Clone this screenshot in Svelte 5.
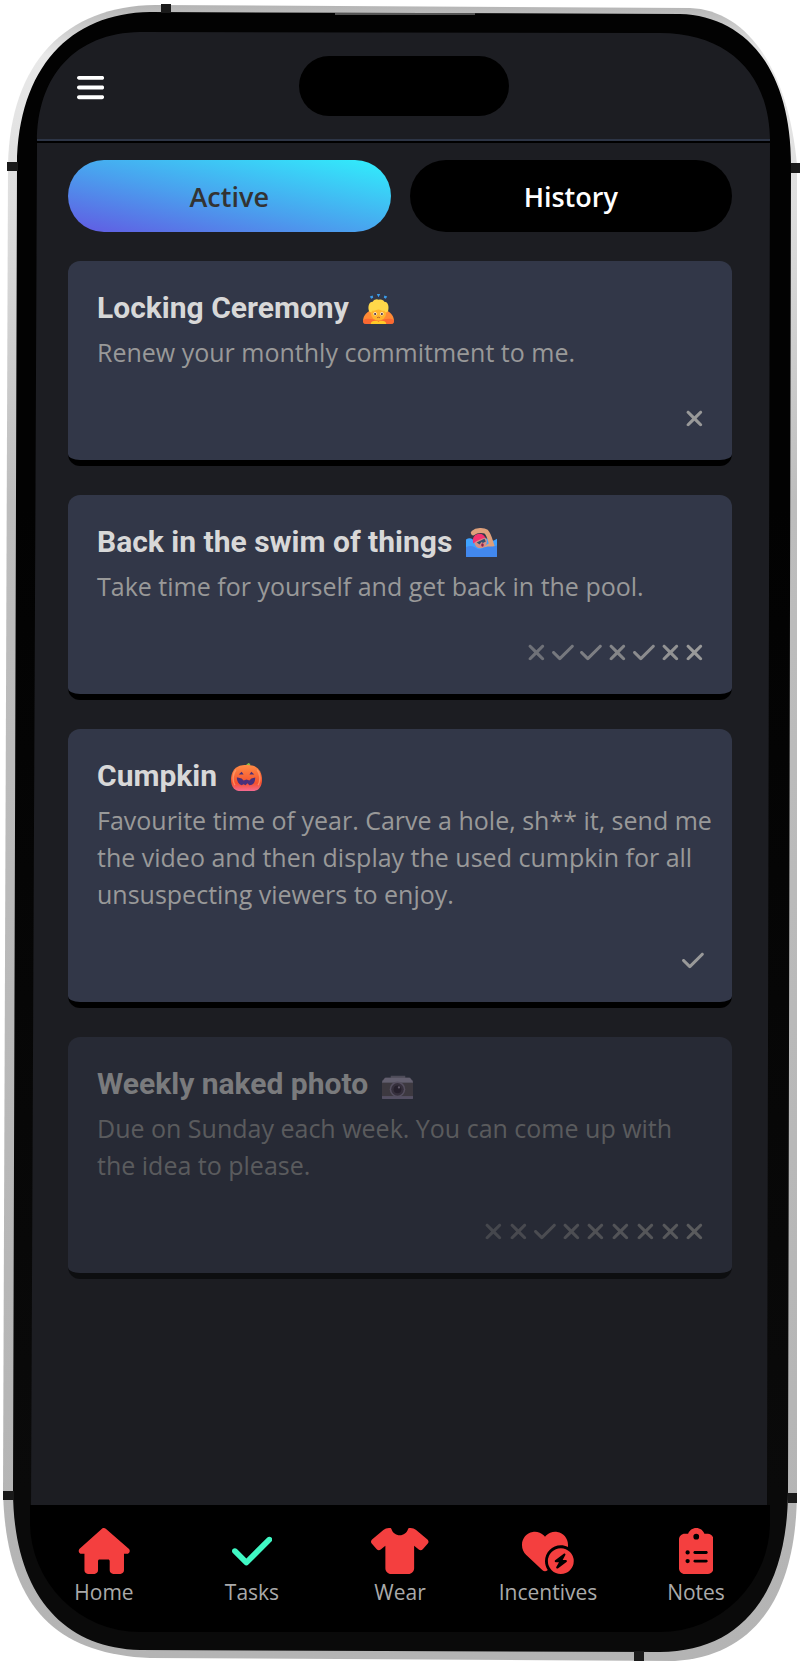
<script>
  let tab = 'active';

  const tasks = [
    {
      title: 'Locking Ceremony',
      emoji: 'bow',
      text: 'Renew your monthly commitment to me.',
      results: 'x'
    },
    {
      title: 'Back in the swim of things',
      emoji: 'swim',
      text: 'Take time for yourself and get back in the pool.',
      results: 'xvvxvxx'
    },
    {
      title: 'Cumpkin',
      emoji: 'pumpkin',
      text: 'Favourite time of year. Carve a hole, sh** it, send me the video and then display the used cumpkin for all unsuspecting viewers to enjoy.',
      results: 'v'
    },
    {
      title: 'Weekly naked photo',
      emoji: 'camera',
      text: 'Due on Sunday each week. You can come up with the idea to please.',
      results: 'xxvxxxxxx',
      faded: true
    }
  ];

  const check = 'M438.6 105.4c12.5 12.5 12.5 32.8 0 45.3l-256 256c-12.5 12.5-32.8 12.5-45.3 0l-128-128c-12.5-12.5-12.5-32.8 0-45.3s32.8-12.5 45.3 0L160 338.7 393.4 105.4c12.5-12.5 32.8-12.5 45.3 0z';
  const cross = 'M342.6 150.6c12.5-12.5 12.5-32.8 0-45.3s-32.8-12.5-45.3 0L192 210.7 86.6 105.4c-12.5-12.5-32.8-12.5-45.3 0s-12.5 32.8 0 45.3L146.7 256 41.4 361.4c-12.5 12.5-12.5 32.8 0 45.3s32.8 12.5 45.3 0L192 301.3 297.4 406.6c12.5 12.5 32.8 12.5 45.3 0s12.5-32.8 0-45.3L237.3 256 342.6 150.6z';

  const nav = [
    {
      label: 'Home',
      width: 576,
      path: 'M575.8 255.5c0 18-15 32.1-32 32.1l-32 0 0 184c0 22-18 40-40 40l-79 0c-22 0-40-18-40-40l0-104c0-10-7-17-17-17l-96 0c-10 0-17 7-17 17l0 104c0 22-18 40-40 40l-72 0c-22 0-39-18-39-40l0-184-32 0c-18 0-32-14-32-32.1c0-9 3-17 10-24L266.4 8c7-7 15-8 22-8s15 2 21 7L564.8 231.5c8 7 12 15 11 24z'
    },
    { label: 'Tasks', width: 448, path: check, current: true },
    {
      label: 'Wear',
      width: 640,
      path: 'M211.8 0c7.8 0 14.3 5.7 16.7 13.2C240.8 51.9 277.1 80 320 80s79.2-28.1 91.5-66.8C413.9 5.7 420.4 0 428.2 0l12.6 0c22.5 0 44.2 7.9 61.5 22.3L628.5 127.4c6.6 5.5 10.7 13.5 11.4 22.1s-2.1 17.1-7.8 23.6l-56 64c-11.4 13.1-31.2 14.6-44.6 3.5L480 197.7 480 448c0 35.3-28.7 64-64 64l-192 0c-35.3 0-64-28.7-64-64l0-250.3-51.5 42.9c-13.3 11.1-33.1 9.6-44.6-3.5l-56-64c-5.7-6.5-8.5-15-7.8-23.6s4.8-16.6 11.4-22.1L137.7 22.3C155 7.9 176.7 0 199.2 0l12.6 0z'
    },
    {
      label: 'Incentives',
      width: 576,
      path: 'M47.6 300.4L228.3 469.1c7.5 7 17.4 10.9 27.7 10.9s20.2-3.9 27.7-10.9l2.6-2.4C267.2 438.6 256 404.6 256 368c0-97.2 78.8-176 176-176c28.3 0 55 6.7 78.7 18.5c.9-6.5 1.3-13 1.3-19.6l0-5.8c0-69.9-50.5-129.5-119.4-141C347 36.5 300.6 51.4 268 84L256 96 244 84c-32.6-32.6-79-47.5-124.6-39.9C50.5 55.6 0 115.2 0 185.1l0 5.8c0 41.5 17.2 81.2 47.6 109.5zM432 512a144 144 0 1 0 0-288 144 144 0 1 0 0 288zm47.9-225c4.3 3.7 5.4 9.9 2.6 14.9L452.4 356l35.6 0c5.2 0 9.8 3.3 11.4 8.2s-.1 10.3-4.2 13.4l-96 72c-4.5 3.4-10.8 3.2-15.1-.6s-5.4-9.9-2.6-14.9L411.6 380 376 380c-5.2 0-9.8-3.3-11.4-8.2s.1-10.3 4.2-13.4l96-72c4.5-3.4 10.8-3.2 15.1 .6z'
    },
    {
      label: 'Notes',
      width: 384,
      path: 'M192 0c-41.8 0-77.4 26.7-90.5 64L64 64C28.7 64 0 92.7 0 128L0 448c0 35.3 28.7 64 64 64l256 0c35.3 0 64-28.7 64-64l0-320c0-35.3-28.7-64-64-64l-37.5 0C269.4 26.7 233.8 0 192 0zm0 64a32 32 0 1 1 0 64 32 32 0 1 1 0-64zM72 272a24 24 0 1 1 48 0 24 24 0 1 1 -48 0zm104-16l128 0c8.8 0 16 7.2 16 16s-7.2 16-16 16l-128 0c-8.8 0-16-7.2-16-16s7.2-16 16-16zM72 368a24 24 0 1 1 48 0 24 24 0 1 1 -48 0zm88 0c0-8.8 7.2-16 16-16l128 0c8.8 0 16 7.2 16 16s-7.2 16-16 16l-128 0c-8.8 0-16-7.2-16-16z'
    }
  ];

  // newest result is on the right, older ones fade out
  function fade(i, count) {
    return 1 - (count - 1 - i) * (0.4 / Math.max(count - 1, 6));
  }
</script>

<div class="phone">
  <svg class="frame" viewBox="0 0 800 1664" preserveAspectRatio="none" aria-hidden="true">
    <defs>
      <linearGradient id="metal" x1="0" y1="0" x2="0" y2="1">
        <stop offset="0" stop-color="#b4b4b4" />
        <stop offset="0.03" stop-color="#e8e8e8" />
        <stop offset="0.12" stop-color="#dedede" />
        <stop offset="0.3" stop-color="#bdbdbd" />
        <stop offset="1" stop-color="#b4b4b4" />
      </linearGradient>
      <linearGradient id="bezel" x1="0" y1="0" x2="0" y2="1">
        <stop offset="0.3" stop-color="#020202" />
        <stop offset="0.9" stop-color="#0a0a0a" />
      </linearGradient>
    </defs>
    <path fill="url(#metal)" d="M8 165C10 62 66 6 155 5L690 8C745 10 788 66 797 165L797 1490C797 1596 755 1656 675 1661L150 1658C52 1654 5 1602 3 1490Z" />
    <path fill="url(#bezel)" d="M17 165C18 68 70 13 150 12L680 14C745 16 791 68 791 165L788 1490C788 1595 740 1652 660 1652L140 1650C60 1648 13 1590 13 1490Z" />
    <path fill="#1c1d22" d="M37 142C37 76 75 33 140 32L660 33C730 33 770 76 770 142L767 1505L31 1505Z" />
    <path fill="#1a1a1a" d="M161 4h10v9h-10zM7 162h11v9H7zM791 163h9v10h-9zM3 1491h11v9H3zM788 1493h9v10h-9zM634 1651h10v10h-10z" />
    <path fill="#555" d="M335 13h140v2H335z" />
  </svg>

  <header>
    <button class="menu" aria-label="Menu">
      <svg viewBox="0 0 448 512" aria-hidden="true">
        <path d="M0 96C0 78.3 14.3 64 32 64l384 0c17.7 0 32 14.3 32 32s-14.3 32-32 32L32 128C14.3 128 0 113.7 0 96zM0 256c0-17.7 14.3-32 32-32l384 0c17.7 0 32 14.3 32 32s-14.3 32-32 32L32 288c-17.7 0-32-14.3-32-32zM448 416c0 17.7-14.3 32-32 32L32 448c-17.7 0-32-14.3-32-32s14.3-32 32-32l384 0c17.7 0 32 14.3 32 32z" />
      </svg>
    </button>
    <div class="island"></div>
  </header>

  <main>
    <div class="tabs">
      <button class:selected={tab === 'active'} on:click={() => (tab = 'active')}>Active</button>
      <button class:selected={tab === 'history'} on:click={() => (tab = 'history')}>History</button>
    </div>

    {#each tasks as task}
      <article class="card" class:faded={task.faded}>
        <h2>
          {task.title}
          <svg class="emoji" viewBox="0 0 32 32" aria-hidden="true">
            {#if task.emoji === 'bow'}
              <path fill="#3b9be8" d="M7 3.5l3-1 .5 2.5-2 1zM14.2 1h3.6L16 4.500zM25 3.500l-3-1-.5 2.500 2 1z" />
              <path fill="#ff8a35" d="M0 29c0-5 3-9 8-11h16c5 2 8 6 8 11 0 2-1 3-3 3H3c-2 0-3-1-3-3z" />
              <path fill="#f8532f" d="M0 28c4-3 11-1 16 1 5-2 12-4 16-1 0 3-1 4-3 4H3c-2 0-3-1-3-4z" opacity=".6" />
              <circle cx="16" cy="20.5" r="8" fill="#ffb52e" />
              <path fill="#ffd84a" d="M6 18c-1-4 0-9 4-9 2-3 5-3 6-2 3-1 5 0 6 2 4 0 5 5 4 9-1 3-3 2-4 0-3 1-4-1-6-1s-4 2-6 1c-1 2-3 3-4 0z" />
              <circle cx="12.5" cy="21.5" r="1.7" fill="#fff" />
              <circle cx="19.5" cy="21.5" r="1.7" fill="#fff" />
              <circle cx="12.5" cy="21.7" r="1.1" fill="#4a2b3a" />
              <circle cx="19.5" cy="21.7" r="1.1" fill="#4a2b3a" />
              <path fill="none" stroke="#a54b25" stroke-width=".8" d="M14.500 25.500q1.500-1 3 0" />
              <path fill="#ffc928" d="M8 32c0-3 4-4 7-3l1 1 1-1c3-1 7 0 7 3z" />
            {:else if task.emoji === 'swim'}
              <path fill="#3fa2ff" d="M0 13q4-3 7 0t8 0 8 0 9-1v18q0 1-1 1H1q-1 0-1-1z" />
              <path fill="none" stroke="#dfa07b" stroke-width="5" stroke-linecap="round" stroke-linejoin="round" d="M7.500 6C11 3 18 3 21 5c3 3 4 9 6 15" />
              <path fill="#dfa07b" d="M20 19l5-3 5 5-3 2-9-1z" />
              <circle cx="15" cy="15.500" r="6.500" fill="#d89085" />
              <path fill="#f4326f" d="M7.500 17C6 11 9 7 14 7c3 0 5 2 6 4-5 1-9 3-12.500 6z" />
              <path fill="#34516f" d="M11 16l8-4 1.500 3-3 1.500-1.500-1-2 2.500z" />
              <ellipse cx="17" cy="18.500" rx="1.300" ry="1.800" fill="#8f1f4e" />
              <path fill="#4288ee" d="M0 21c3-2 6-2 9 0 4 3 7 2 10 0 4-2 9 0 13-2v11q0 1-1 1H1q-1 0-1-1z" />
            {:else if task.emoji === 'pumpkin'}
              <defs>
                <linearGradient id="pumpkin" x1="0" y1="0" x2="0" y2="1">
                  <stop offset="0" stop-color="#ff8b45" />
                  <stop offset="0.7" stop-color="#f4502f" />
                  <stop offset="1" stop-color="#f56a92" />
                </linearGradient>
              </defs>
              <path fill="#8ebd45" d="M13 5c2 0 4-2 5-3l2 1-1 3z" />
              <path fill="url(#pumpkin)" d="M9 5c3-1 11-1 14 0 6 2 9 8 9 14 0 8-4 12-10 12H10C4 31 0 27 0 19 0 13 3 7 9 5z" />
              <path fill="none" stroke="#ffa072" stroke-width="1.5" d="M5 9c-3 4-4 11-1 16M27 9c3 4 4 11 1 16" opacity=".7" />
              <path fill="#49307a" d="M8 14l3-3 2 3zM19 14l2-3 3 3zM7 17l4 1 2 2 3-1 3 1 2-2 4-1c0 5-2 8-6 8l-2-2-2 2-2-1-2 1c-3-1-5-4-5-8z" />
            {:else}
              <path fill="#807b91" d="M4 9h5V7h15v2h4l4 3v18q0 1-1 1H1q-1 0-1-1V12z" />
              <path fill="#5f565f" d="M0 14h32v14H0z" />
              <path fill="#aaa1bb" d="M3 9h26l3 5H0z" />
              <circle cx="16" cy="21" r="8" fill="#8f829e" />
              <circle cx="16" cy="21" r="6.5" fill="#514458" />
              <circle cx="16" cy="21" r="4" fill="#302438" />
              <circle cx="17.5" cy="19" r="1.2" fill="#a495b0" />
              <path fill="#8d82a2" d="M0 28h32v2q0 1-1 1H1q-1 0-1-1z" />
            {/if}
          </svg>
        </h2>
        <p>{task.text}</p>
        <div class="results">
          {#each task.results.split('') as result, i}
            <svg
              viewBox="0 0 {result === 'v' ? 448 : 384} 512"
              role="img"
              aria-label={result === 'v' ? 'Done' : 'Missed'}
              style="opacity: {fade(i, task.results.length)}"
            >
              <path d={result === 'v' ? check : cross} />
            </svg>
          {/each}
        </div>
      </article>
    {/each}
  </main>

  <nav>
    {#each nav as item}
      <a href="#{item.label.toLowerCase()}" class:current={item.current}>
        <svg viewBox="0 0 {item.width} 512" aria-hidden="true"><path d={item.path} /></svg>
        <span>{item.label}</span>
      </a>
    {/each}
  </nav>
</div>

<style>
  :global(body) { margin: 0; background: #fff; }
  * { box-sizing: border-box; }

  .phone {
    position: relative;
    display: flex;
    flex-direction: column;
    min-height: 100vh;
    padding: 32px 30px;
    font-family: "Open Sans", "Noto Sans", sans-serif;
    color: #999;
  }
  .frame { position: absolute; inset: 0; width: 100%; height: 100%; }
  header, main, nav { position: relative; }

  header {
    display: grid;
    grid-template-columns: 1fr auto 1fr;
    align-items: center;
    height: 109px;
    margin-left: 7px;
    border-bottom: 2px solid #2d3546;
    box-shadow: 0 2px 0 #000;
  }
  .menu { justify-self: start; margin-left: 40px; padding: 3px 0 0; border: none; background: none; cursor: pointer; }
  .menu svg { display: block; height: 31px; fill: #fff; }
  .island { width: 210px; height: 60px; border-radius: 30px; background: #000; }

  main { flex: 1; display: flex; flex-direction: column; gap: 29px; padding: 19px 38px 29px; }

  .tabs { display: grid; grid-template-columns: 1fr 1fr; gap: 19px; }
  .tabs button {
    height: 72px;
    border: none;
    border-radius: 36px;
    background: #000;
    color: #fff;
    font: 600 27px "Open Sans", "Noto Sans", sans-serif;
    cursor: pointer;
  }
  .tabs .selected { background: linear-gradient(to top right, #6259e2, #4aa0ee 45%, #30f0fc); color: #333; }

  .card { padding: 29px 20px 29px 29px; border-bottom: 6px solid #000; border-radius: 12px; background: #323748; }
  .faded { opacity: 0.5; }
  h2 {
    display: flex;
    align-items: center;
    gap: 14px;
    margin: 0 0 8px;
    font: bold 30px/36px Roboto, sans-serif;
    color: #d8d8d8;
  }
  .emoji { width: 31px; height: 31px; }
  p { margin: 0; font-size: 25px; line-height: 37px; }
  .results { display: flex; justify-content: flex-end; gap: 6px; margin: 35px 8px 0 0; }
  .results svg { display: block; height: 25px; fill: #999; }

  nav {
    display: grid;
    grid-template-columns: repeat(5, 1fr);
    height: 127px;
    padding-top: 23px;
    border-radius: 0 0 110px 110px;
    background: #000;
  }
  nav a { display: flex; flex-direction: column; align-items: center; gap: 4px; color: #aaa; text-decoration: none; }
  nav svg { height: 46px; fill: #f43f3f; }
  nav .current svg { fill: #40f8c4; }
  nav span { font-size: 21px; line-height: 28px; }
</style>
